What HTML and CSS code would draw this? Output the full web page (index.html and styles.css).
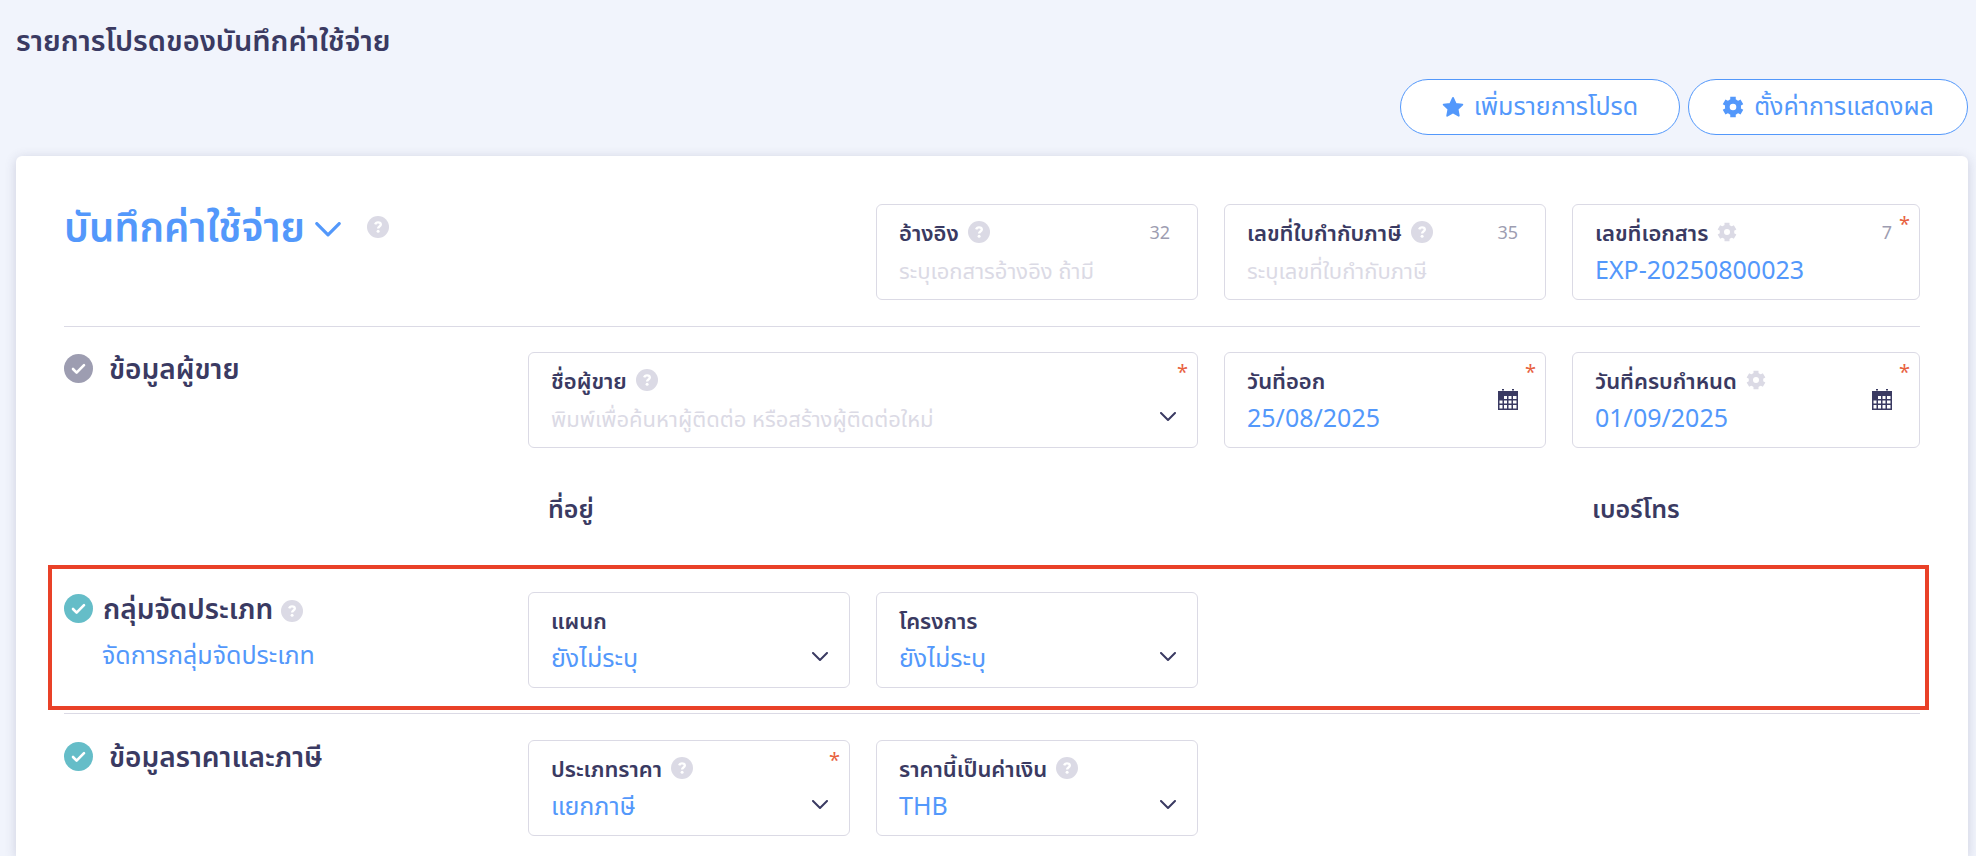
FILE: index.html
```html
<!DOCTYPE html>
<html lang="th">
<head>
  <meta charset="UTF-8">
  <meta name="viewport" content="width=device-width, initial-scale=1.0">
  <title>รายการโปรดของบันทึกค่าใช้จ่าย</title>
  <link rel="stylesheet" href="styles.css">
</head>
<body>
  <svg class="sprite" aria-hidden="true">
    <symbol id="i-help" viewBox="0 0 22 22">
      <circle cx="11" cy="11" r="11" fill="#dbdae5"/>
      <path d="M8.2 8.4C8.6 6.9 9.6 6.4 11 6.4c1.700 0 2.800.9 2.800 2.200 0 1.900-2.700 1.900-2.700 3.800" fill="none" stroke="#fff" stroke-width="2.400"/>
      <circle cx="11.100" cy="15.300" r="1.500" fill="#fff"/>
    </symbol>
    <symbol id="i-gear" viewBox="0 0 24 24">
      <circle cx="12" cy="12" r="6.200" fill="none" stroke="currentColor" stroke-width="5.200"/>
      <path d="M12 .8v5M12 18.200v5M2.300 6.400l4 2.300M17.700 15.300l4 2.300M2.300 17.600l4-2.300M17.700 8.700l4-2.300" fill="none" stroke="currentColor" stroke-width="6"/>
    </symbol>
    <symbol id="i-star" viewBox="0 0 24 24">
      <path fill="currentColor" stroke="currentColor" stroke-width="2" stroke-linejoin="round" d="M12 2l3 6.500 7.200.9-5.200 5 1.300 7.100L12 18l-6.300 3.500L7 14.400l-5.200-5L9 8.500z"/>
    </symbol>
    <symbol id="i-check" viewBox="0 0 29 29">
      <circle cx="14.500" cy="14.500" r="14.500" fill="currentColor"/>
      <path d="M9 15l3.600 3.600 7.400-7.400" fill="none" stroke="#fff" stroke-width="2.600" stroke-linecap="round" stroke-linejoin="round"/>
    </symbol>
    <symbol id="i-down" viewBox="0 0 16 10">
      <path d="M1 1l7 7 7-7" fill="none" stroke="currentColor" stroke-width="2" stroke-linecap="round" stroke-linejoin="round"/>
    </symbol>
    <symbol id="i-calendar" viewBox="0 0 20 22">
      <path fill="currentColor" fill-rule="evenodd" d="M0 2h20v19H0zM6 7v3h3V7zM10.500 7v3h3V7zM15 7v3h3.500V7zM1.500 11.500v3h3v-3zM6 11.500v3h3v-3zM10.500 11.500v3h3v-3zM15 11.500v3h3.500v-3zM1.500 16v3.500h3V16zM6 16v3.500h3V16zM10.500 16v3.500h3V16zM15 16v3.500h3.500V16zM4 0h2v1.500H4zM14 0h2v1.500h-2z"/>
    </symbol>
  </svg>

  <h1>รายการโปรดของบันทึกค่าใช้จ่าย</h1>
  <div class="toolbar">
    <button class="pill"><svg><use href="#i-star"/></svg>เพิ่มรายการโปรด</button>
    <button class="pill"><svg><use href="#i-gear"/></svg>ตั้งค่าการแสดงผล</button>
  </div>

  <main class="card">
    <div class="row row-head">
      <div class="doc-title">
        <button class="doc-type">บันทึกค่าใช้จ่าย<svg><use href="#i-down"/></svg></button>
        <svg class="help"><use href="#i-help"/></svg>
      </div>
      <div class="field">
        <div class="field-head">
          <label for="ref">อ้างอิง</label>
          <svg class="help"><use href="#i-help"/></svg>
          <span class="count">32</span>
        </div>
        <input type="text" id="ref" placeholder="ระบุเอกสารอ้างอิง ถ้ามี">
      </div>
      <div class="field">
        <div class="field-head">
          <label for="tax-no">เลขที่ใบกำกับภาษี</label>
          <svg class="help"><use href="#i-help"/></svg>
          <span class="count">35</span>
        </div>
        <input type="text" id="tax-no" placeholder="ระบุเลขที่ใบกำกับภาษี">
      </div>
      <div class="field">
        <div class="field-head">
          <label for="doc-no">เลขที่เอกสาร</label>
          <svg class="gear"><use href="#i-gear"/></svg>
          <span class="count">7</span>
        </div>
        <input type="text" id="doc-no" value="EXP-20250800023">
        <span class="required">*</span>
      </div>
    </div>

    <section class="row row-vendor">
      <h2 class="muted"><svg><use href="#i-check"/></svg>ข้อมูลผู้ขาย</h2>
      <div class="field wide">
        <div class="field-head">
          <label for="vendor">ชื่อผู้ขาย</label>
          <svg class="help"><use href="#i-help"/></svg>
        </div>
        <input type="text" id="vendor" placeholder="พิมพ์เพื่อค้นหาผู้ติดต่อ หรือสร้างผู้ติดต่อใหม่">
        <svg class="down"><use href="#i-down"/></svg>
        <span class="required">*</span>
      </div>
      <div class="field">
        <div class="field-head"><label for="issued">วันที่ออก</label></div>
        <input type="text" id="issued" value="25/08/2025">
        <svg class="calendar"><use href="#i-calendar"/></svg>
        <span class="required">*</span>
      </div>
      <div class="field">
        <div class="field-head">
          <label for="due">วันที่ครบกำหนด</label>
          <svg class="gear"><use href="#i-gear"/></svg>
        </div>
        <input type="text" id="due" value="01/09/2025">
        <svg class="calendar"><use href="#i-calendar"/></svg>
        <span class="required">*</span>
      </div>
      <h3 class="address">ที่อยู่</h3>
      <h3>เบอร์โทร</h3>
    </section>

    <section class="row row-group">
      <div class="group-title">
        <h2><svg><use href="#i-check"/></svg>กลุ่มจัดประเภท</h2>
        <svg class="help"><use href="#i-help"/></svg>
        <a href="#">จัดการกลุ่มจัดประเภท</a>
      </div>
      <div class="field">
        <div class="field-head"><label for="department">แผนก</label></div>
        <select id="department"><option>ยังไม่ระบุ</option></select>
        <svg class="down"><use href="#i-down"/></svg>
      </div>
      <div class="field">
        <div class="field-head"><label for="project">โครงการ</label></div>
        <select id="project"><option>ยังไม่ระบุ</option></select>
        <svg class="down"><use href="#i-down"/></svg>
      </div>
    </section>

    <section class="row row-price">
      <h2><svg><use href="#i-check"/></svg>ข้อมูลราคาและภาษี</h2>
      <div class="field">
        <div class="field-head">
          <label for="price-type">ประเภทราคา</label>
          <svg class="help"><use href="#i-help"/></svg>
        </div>
        <select id="price-type"><option>แยกภาษี</option></select>
        <svg class="down"><use href="#i-down"/></svg>
        <span class="required">*</span>
      </div>
      <div class="field">
        <div class="field-head">
          <label for="currency">ราคานี้เป็นค่าเงิน</label>
          <svg class="help"><use href="#i-help"/></svg>
        </div>
        <select id="currency"><option>THB</option></select>
        <svg class="down"><use href="#i-down"/></svg>
      </div>
    </section>
  </main>
</body>
</html>
```
FILE: styles.css
```css
* {
  box-sizing: border-box;
}
body {
  display: flex;
  flex-direction: column;
  min-height: 100vh;
  margin: 0;
  padding: 18px 8px 0 16px;
  background: #f1f4fc;
  color: #3a3a62;
  font-family: "Noto Sans", "Noto Sans Thai", sans-serif;
}
h1, h2, h3 {
  margin: 0;
  font-weight: 600;
}
h1 {
  font-size: 29px;
  line-height: 44px;
}
input, select, button {
  padding: 0;
  border: none;
  background: none;
  color: #5398fb;
  font-family: inherit;
  outline: none;
}
.sprite {
  position: absolute;
  width: 0;
  height: 0;
}

.toolbar {
  display: flex;
  justify-content: flex-end;
  gap: 8px;
  margin: 17px 0 21px;
}
.pill {
  display: flex;
  align-items: center;
  justify-content: center;
  gap: 10px;
  width: 280px;
  height: 56px;
  padding-bottom: 4px;
  border: 1px solid #5398fb;
  border-radius: 28px;
  background: #fff;
  font-size: 25px;
  line-height: 36px;
  cursor: pointer;
}
.pill svg {
  width: 22px;
  height: 22px;
  margin-top: 4px;
}

.card {
  flex: 1;
  padding: 48px 48px 16px;
  border-radius: 6px 6px 0 0;
  background: #fff;
  box-shadow: 0 2px 12px rgba(58, 58, 98, 0.2);
}
.row {
  display: grid;
  grid-template-columns: 4fr 3fr 3fr 3fr 3fr;
  align-items: start;
}
.row-head {
  padding-bottom: 26px;
  border-bottom: 1px solid #dbdae5;
}
.row-vendor {
  padding: 25px 0 39px;
}
.row-group {
  margin: 0 -9px 3px -16px;
  padding: 23px 5px 18px 12px;
  border: 4px solid #e94128;
}
.row-price {
  padding-top: 26px;
  border-top: 1px solid #dbdae5;
}

.doc-title {
  grid-column: span 2;
  display: flex;
  align-items: center;
  gap: 26px;
}
.doc-type {
  display: flex;
  align-items: center;
  gap: 10px;
  font-size: 40px;
  line-height: 46px;
  font-weight: 600;
}
.doc-type svg {
  width: 26px;
  height: 16px;
  margin-top: 6px;
}
h2 {
  display: flex;
  align-items: center;
  gap: 16px;
  font-size: 28px;
  line-height: 32px;
}
h2 svg {
  width: 29px;
  height: 29px;
  color: #65bdc8;
}
.muted svg {
  color: #9d9db1;
}
h3 {
  margin-top: 42px;
  padding-left: 20px;
  font-size: 25px;
  line-height: 36px;
}
.address {
  grid-column: 2 / 5;
}
.group-title {
  display: flex;
  flex-wrap: wrap;
  align-items: center;
  column-gap: 8px;
}
.group-title h2 {
  gap: 10px;
}
.group-title .help {
  margin-top: 6px;
}
.group-title a {
  width: 100%;
  padding: 12px 0 0 38px;
  color: #5398fb;
  font-size: 25px;
  line-height: 36px;
  text-decoration: none;
}

.field {
  position: relative;
  height: 96px;
  margin-right: 26px;
  padding: 13px 22px 0;
  border: 1px solid #dbdae5;
  border-radius: 6px;
}
.field:nth-child(4) {
  margin-right: 0;
}
.wide {
  grid-column: span 2;
}
.field-head {
  display: flex;
  align-items: center;
  gap: 9px;
  height: 28px;
  margin-bottom: 7px;
}
label {
  font-size: 22px;
  line-height: 28px;
  font-weight: 600;
}
.field input, .field select {
  display: block;
  width: 100%;
  height: 32px;
  font-size: 25px;
  line-height: 32px;
  appearance: none;
}
.field input::placeholder {
  color: #dbdae5;
  font-size: 22px;
}
.count {
  margin-left: auto;
  padding-right: 5px;
  color: #9d9db1;
  font-size: 18px;
}
.help {
  flex: none;
  width: 22px;
  height: 22px;
}
.gear {
  flex: none;
  width: 20px;
  height: 20px;
  color: #dbdae5;
}
.required {
  position: absolute;
  top: 7px;
  right: 9px;
  color: #e8623f;
  font-size: 20px;
  line-height: 24px;
}
.down {
  position: absolute;
  top: 59px;
  right: 21px;
  width: 16px;
  height: 10px;
  pointer-events: none;
}
.calendar {
  position: absolute;
  top: 36px;
  right: 27px;
  width: 20px;
  height: 22px;
}
```
